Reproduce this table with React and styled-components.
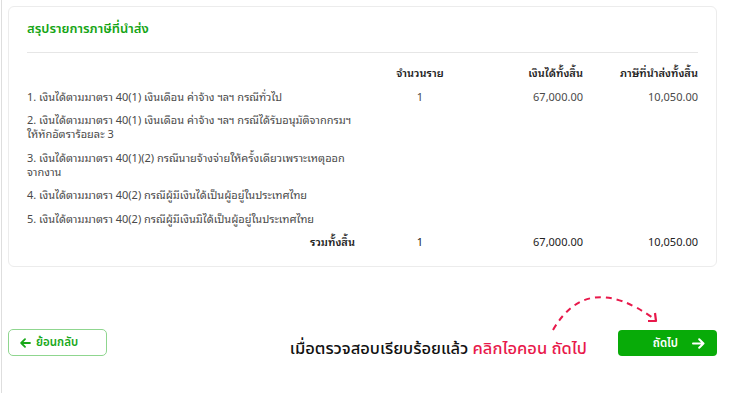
import React from "react";
import styled, { createGlobalStyle } from "styled-components";

const GlobalStyle = createGlobalStyle`
  html, body { margin: 0; padding: 0; background: #ffffff; }
  body { font-family: "Noto Sans Thai", "Noto Sans", "Liberation Sans", sans-serif; }
`;

const Page = styled.div`
  margin-left: 1px;
  border-left: 1px solid #dedede;
  height: 393px;
  box-sizing: border-box;
  padding: 6px 16px 0 6px;
  display: flex;
  flex-direction: column;
`;

const Card = styled.section`
  border: 1px solid #ececec;
  border-radius: 6px;
  padding: 13px 18px 18px 18px;
  background: #fff;
`;

const Title = styled.h2`
  margin: 0;
  font-family: "Noto Sans Thai", "Noto Sans", sans-serif;
  font-size: 13px;
  line-height: 18px;
  font-weight: 600;
  color: #15a515;
`;

const Divider = styled.hr`
  border: 0;
  border-top: 1px solid #e6e6e6;
  margin: 14px 0 12px 0;
`;

const Table = styled.div`
  display: grid;
  grid-template-columns: 328px 130px 98px 115px;
  row-gap: 9.5px;
  font-family: "Noto Sans Thai Looped", "Noto Sans Thai", "Noto Sans", sans-serif;
  font-size: 11px;
  line-height: 14px;
  color: #4a4a4a;
`;

const Cell = styled.div`
  text-align: ${(p) => p.$align || "left"};
  font-weight: ${(p) => (p.$bold ? 600 : 400)};
  color: ${(p) => (p.$dark ? "#222" : "#4a4a4a")};
`;

const Line = styled.span`
  display: block;
  white-space: nowrap;
`;

const Footer = styled.div`
  margin-top: 62px;
  display: flex;
  align-items: flex-start;
`;

const BackButton = styled.button`
  width: 99px;
  height: 27px;
  box-sizing: border-box;
  border: 1px solid #8fd68f;
  border-radius: 5px;
  background: #fff;
  color: #18a818;
  font-family: "Noto Sans Thai", "Noto Sans", sans-serif;
  font-size: 11.5px;
  font-weight: 600;
  display: flex;
  align-items: center;
  gap: 5px;
  padding: 0 0 0 11px;
  cursor: pointer;
`;

const Spacer = styled.div`
  flex: 1;
`;

const NextGroup = styled.div`
  position: relative;
  display: flex;
  align-items: flex-start;
  gap: 31px;
`;

const Hint = styled.p`
  margin: 10px 0 0 0;
  font-family: "Noto Sans Thai", "Noto Sans", sans-serif;
  font-size: 16.5px;
  line-height: 20px;
  font-weight: 500;
  color: #111;
  white-space: nowrap;
`;

const Accent = styled.span`
  color: #e8194b;
`;

const NextButton = styled.button`
  margin-top: 1px;
  width: 99px;
  height: 26px;
  border: 0;
  border-radius: 4px;
  background: #08ab08;
  color: #fff;
  font-family: "Noto Sans Thai", "Noto Sans", sans-serif;
  font-size: 11.5px;
  font-weight: 600;
  display: flex;
  align-items: center;
  justify-content: flex-end;
  gap: 14px;
  padding: 0 12px 0 0;
  cursor: pointer;
`;

const CurveArrow = styled.svg`
  position: absolute;
  right: 56px;
  top: -36px;
  overflow: visible;
`;

const rows = [
  { lines: ["1. เงินได้ตามมาตรา 40(1) เงินเดือน ค่าจ้าง ฯลฯ กรณีทั่วไป"], count: "1", income: "67,000.00", tax: "10,050.00" },
  { lines: ["2. เงินได้ตามมาตรา 40(1) เงินเดือน ค่าจ้าง ฯลฯ กรณีได้รับอนุมัติจากกรมฯ", "ให้หักอัตราร้อยละ 3"] },
  { lines: ["3. เงินได้ตามมาตรา 40(1)(2) กรณีนายจ้างจ่ายให้ครั้งเดียวเพราะเหตุออก", "จากงาน"] },
  { lines: ["4. เงินได้ตามมาตรา 40(2) กรณีผู้มีเงินได้เป็นผู้อยู่ในประเทศไทย"] },
  { lines: ["5. เงินได้ตามมาตรา 40(2) กรณีผู้มีเงินมิได้เป็นผู้อยู่ในประเทศไทย"] },
];

const ArrowLeft = () => (
  <svg width="11" height="10" viewBox="0 0 11 10" fill="none">
    <path d="M10 5H1.5M5 1.2L1.2 5L5 8.8" stroke="#18a818" strokeWidth="1.8" strokeLinecap="round" strokeLinejoin="round" />
  </svg>
);

const ArrowRight = () => (
  <svg width="13" height="11" viewBox="0 0 13 11" fill="none">
    <path d="M1 5.5H11.5M7.2 1.3L11.5 5.5L7.2 9.7" stroke="#fff" strokeWidth="2" strokeLinecap="round" strokeLinejoin="round" />
  </svg>
);

export default function App() {
  return (
    <>
      <GlobalStyle />
      <Page>
        <Card>
          <Title>สรุปรายการภาษีที่นำส่ง</Title>
          <Divider />
          <Table>
            <Cell />
            <Cell $align="center" $bold $dark>จำนวนราย</Cell>
            <Cell $align="right" $bold $dark>เงินได้ทั้งสิ้น</Cell>
            <Cell $align="right" $bold $dark>ภาษีที่นำส่งทั้งสิ้น</Cell>
            {rows.map((r, i) => (
              <React.Fragment key={i}>
                <Cell>
                  {r.lines.map((l, j) => (
                    <Line key={j}>{l}</Line>
                  ))}
                </Cell>
                <Cell $align="center">{r.count || ""}</Cell>
                <Cell $align="right">{r.income || ""}</Cell>
                <Cell $align="right">{r.tax || ""}</Cell>
              </React.Fragment>
            ))}
            <Cell $align="right" $bold $dark>รวมทั้งสิ้น</Cell>
            <Cell $align="center" $dark>1</Cell>
            <Cell $align="right" $dark>67,000.00</Cell>
            <Cell $align="right" $dark>10,050.00</Cell>
          </Table>
        </Card>
        <Footer>
          <BackButton>
            <ArrowLeft />
            ย้อนกลับ
          </BackButton>
          <Spacer />
          <NextGroup>
            <Hint>
              เมื่อตรวจสอบเรียบร้อยแล้ว <Accent>คลิกไอคอน ถัดไป</Accent>
            </Hint>
            <NextButton>
              ถัดไป
              <ArrowRight />
            </NextButton>
            <CurveArrow width="114" height="40" viewBox="0 0 114 40">
              <path d="M6 37 Q 40 -22 106 25" stroke="#e8194b" strokeWidth="2" fill="none" strokeDasharray="6 5" />
              <path d="M101 28 L109 28 L108 20" stroke="#e8194b" strokeWidth="2.2" fill="none" strokeLinejoin="round" />
            </CurveArrow>
          </NextGroup>
        </Footer>
      </Page>
    </>
  );
}
